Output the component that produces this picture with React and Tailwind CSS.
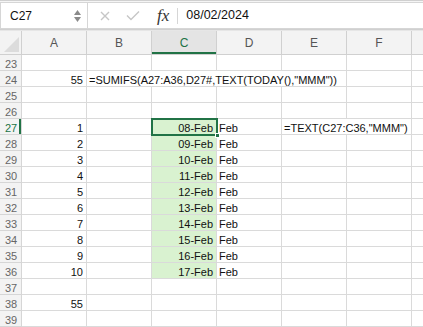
import React from "react";

const COLS = ["A", "B", "C", "D", "E", "F"];
const ROWS = [23, 24, 25, 26, 27, 28, 29, 30, 31, 32, 33, 34, 35, 36, 37, 38, 39];

// cell content by ref
const cells = {
  A24: "55",
  B24: '=SUMIFS(A27:A36,D27#,TEXT(TODAY(),"MMM"))',
  E27: '=TEXT(C27:C36,"MMM")',
  A38: "55",
};
for (let i = 0; i < 10; i++) {
  const r = 27 + i;
  cells["A" + r] = String(i + 1);
  cells["C" + r] = String(8 + i).padStart(2, "0") + "-Feb";
  cells["D" + r] = "Feb";
}

// cells whose right grid line is covered by overflow text
const hideRight = new Set(["B24", "C24", "D24", "E27"]);

function Cell({ col, row }) {
  const ref = col + row;
  const v = cells[ref];
  const isNum = col === "A" || col === "C";
  const shaded = col === "C" && row >= 27 && row <= 36;
  const selected = ref === "C27";
  return (
    <div
      className={`relative h-[16px] border-b border-[#dadada] ${hideRight.has(ref) ? "" : "border-r"} ${shaded ? "bg-[#d9f2d0]" : "bg-white"}`}
    >
      {v && (
        <div
          className={`absolute top-[2px] leading-[14px] whitespace-nowrap ${isNum ? "right-[3px]" : "left-[2px]"} ${selected ? "z-20" : "z-10"}`}
        >
          {v}
        </div>
      )}
      {selected && (
        <div className="absolute -left-[1px] -top-[1px] w-[67px] h-[18px] border-2 border-[#217346] z-30">
          <div className="absolute -right-[4px] -bottom-[4px] w-[5px] h-[5px] bg-[#217346] border border-white" />
        </div>
      )}
    </div>
  );
}

export default function App() {
  return (
    <div className="w-[423px] h-[327px] overflow-hidden bg-white text-[11px] text-[#111] font-['Liberation_Sans',Arial,sans-serif]">
      {/* formula bar */}
      <div className="h-[30px] border-t border-[#d0d0d0] bg-[#f5f5f5] flex items-stretch pt-[1px] border-b border-[#c8c8c8]">
        <div className="w-[88px] h-[27px] bg-white border border-[#d6d6d6] flex items-center pl-[9px] pr-[6px] text-[12px]">
          <span className="flex-1">C27</span>
          <div className="flex flex-col items-center gap-[2px]">
            <svg width="7" height="5" viewBox="0 0 7 5"><path d="M3.5 0L7 5H0z" fill="#8a8a8a" /></svg>
            <svg width="7" height="5" viewBox="0 0 7 5"><path d="M0 0h7L3.5 5z" fill="#8a8a8a" /></svg>
          </div>
        </div>
        <div className="flex-1 h-[27px] bg-white border-y border-[#d6d6d6] flex items-center">
          <svg className="ml-[12px]" width="10" height="10" viewBox="0 0 10 10">
            <path d="M1 1l8 8M9 1l-8 8" stroke="#c6c6c6" strokeWidth="1.4" />
          </svg>
          <svg className="ml-[16px]" width="14" height="11" viewBox="0 0 14 11">
            <path d="M1 5.5l4 4L13 1.5" stroke="#c6c6c6" strokeWidth="1.4" fill="none" />
          </svg>
          <span className="ml-[17px] text-[17px] italic text-[#333] font-['Liberation_Serif',serif] leading-none">
            fx
          </span>
          <div className="ml-[8px] w-px h-[16px] bg-[#d6d6d6]" />
          <span className="ml-[8px] text-[12.5px]">08/02/2024</span>
        </div>
      </div>
      <div className="h-[1px] bg-[#e6e6e6]" />

      {/* grid */}
      <div className="grid grid-cols-[22px_repeat(6,65px)_11px] text-[11px]">
        {/* header row */}
        <div className="relative h-[24px] bg-[#f3f3f3] border-r border-b border-[#d0d0d0] overflow-hidden">
          <svg className="absolute right-[2px] bottom-[2px]" width="15" height="15" viewBox="0 0 15 15">
            <path d="M15 0V15H0z" fill="#dcdcdc" />
          </svg>
        </div>
        {COLS.map((c) => (
          <div
            key={c}
            className={`relative h-[24px] border-r border-b border-[#d0d0d0] flex items-center justify-center text-[12px] ${c === "C" ? "bg-[#e4e4e4] text-[#217346]" : "bg-[#f3f3f3] text-[#555]"}`}
          >
            {c}
            {c === "C" && <div className="absolute left-0 right-0 bottom-0 h-[2px] bg-[#217346]" />}
          </div>
        ))}
        <div className="h-[24px] bg-[#f3f3f3] border-b border-[#d0d0d0]" />

        {ROWS.map((r) => (
          <React.Fragment key={r}>
            <div
              className={`relative h-[16px] border-r border-b border-[#d6d6d6] bg-[#f3f3f3] pl-[5px] pt-[2px] leading-[14px] ${r === 27 ? "text-[#217346] bg-[#e4e4e4]" : "text-[#666]"}`}
            >
              {r}
              {r === 27 && <div className="absolute right-0 top-0 bottom-0 w-[2px] bg-[#217346]" />}
            </div>
            {COLS.map((c) => (
              <Cell key={c} col={c} row={r} />
            ))}
            <div className="h-[16px] border-b border-[#dadada] bg-white" />
          </React.Fragment>
        ))}
      </div>
    </div>
  );
}
